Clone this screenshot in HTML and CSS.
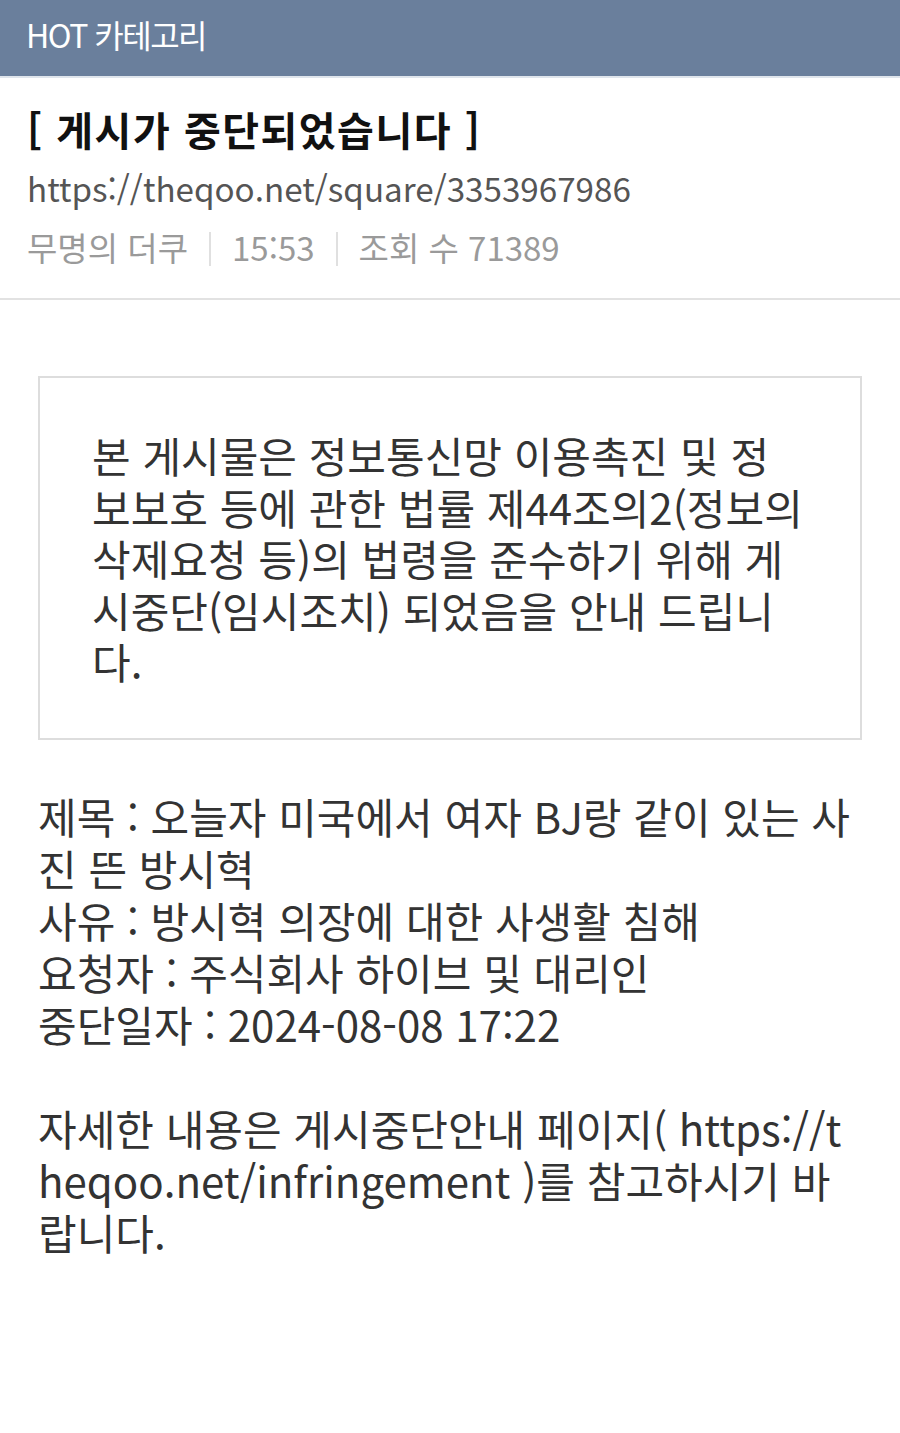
FILE: index.html
```html
<!DOCTYPE html>
<html lang="ko">
<head>
<meta charset="utf-8">
<title>HOT 카테고리</title>
<link rel="stylesheet" href="styles.css">
</head>
<body>
<header class="topbar">
  <span class="topbar-title">HOT 카테고리</span>
</header>
<section class="post-head">
  <h1 class="post-title">[ 게시가 중단되었습니다 ]</h1>
  <div class="post-url">https://theqoo.net/square/3353967986</div>
  <div class="post-meta">
    <span>무명의 더쿠</span>
    <span class="sep"></span>
    <span>15:53</span>
    <span class="sep"></span>
    <span>조회 수 71389</span>
  </div>
</section>
<main class="post-body">
  <div class="notice-box">
    <p class="notice-text">본 게시물은 정보통신망 이용촉진 및 정보보호 등에 관한 법률 제44조의2(정보의 삭제요청 등)의 법령을 준수하기 위해 게시중단(임시조치) 되었음을 안내 드립니다.</p>
  </div>
  <div class="details">
    <p class="detail-lines">제목 : 오늘자 미국에서 여자 BJ랑 같이 있는 사진 뜬 방시혁<br>사유 : 방시혁 의장에 대한 사생활 침해<br>요청자 : 주식회사 하이브 및 대리인<br>중단일자 : 2024-08-08 17:22</p>
    <p class="detail-more">자세한 내용은 게시중단안내 페이지( https://theqoo.net/infringement )를 참고하시기 바랍니다.</p>
  </div>
</main>
</body>
</html>
```

FILE: styles.css
```css
html, body {
  margin: 0;
  padding: 0;
  background: #ffffff;
}
body {
  font-family: "Noto Sans CJK KR", "Noto Sans", sans-serif;
  color: #333333;
  width: 900px;
}
.topbar {
  height: 78px;
  background: #6a7f9c;
  border-bottom: 2px solid #dfe5ec;
  display: flex;
  align-items: center;
  padding-left: 26px;
  box-sizing: border-box;
}
.topbar-title {
  color: #ffffff;
  font-size: 32px;
  letter-spacing: -1.5px;
  line-height: 1;
  margin-top: -8px;
}
.post-head {
  padding: 22px 27px 22px;
  border-bottom: 2px solid #e2e2e2;
}
.post-title {
  margin: 0;
  font-size: 40px;
  font-weight: 700;
  color: #111111;
  line-height: 58px;
  letter-spacing: 1.5px;
  word-spacing: 0;
}
.post-url {
  font-size: 33.2px;
  color: #555555;
  line-height: 60px;
}
.post-meta {
  display: flex;
  align-items: center;
  font-size: 33px;
  color: #9a9a9a;
  line-height: 58px;
}
.sep {
  width: 2px;
  height: 34px;
  background: #e0e0e0;
  margin: 4px 21px 0;
}
.post-body {
  padding: 76px 38px 0;
}
.notice-box {
  border: 2px solid #dddddd;
  padding: 51px 55px 51px 52px;
}
.notice-text {
  margin: 0;
  font-size: 42px;
  line-height: 51.5px;
  color: #333333;
  word-break: break-all;
}
.details {
  margin-top: 50px;
  font-size: 42px;
  line-height: 52px;
  color: #333333;
  word-break: break-all;
}
.detail-lines {
  margin: 0;
}
.detail-more {
  margin: 52px 0 0;
}
```
